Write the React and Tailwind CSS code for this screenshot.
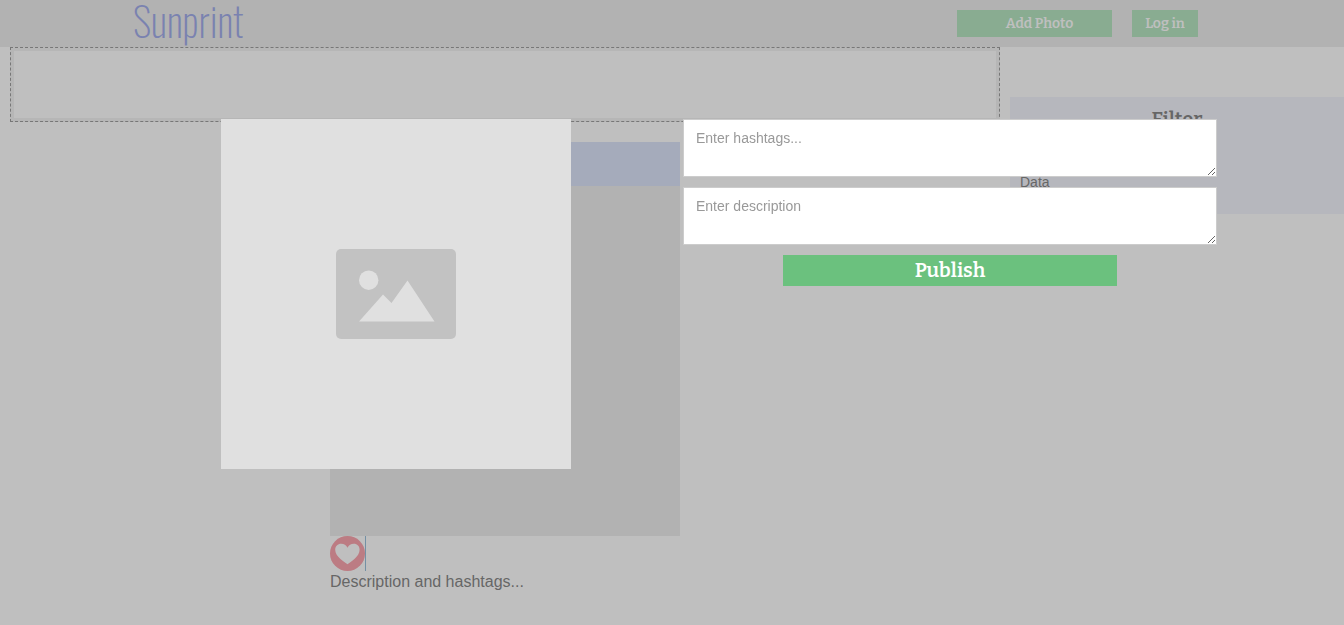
function Header() {
  return (
    <header className="flex h-[47px] items-start justify-between bg-[#e4e4e4] pr-[146px] pl-[133px]">
      <a
        href="#home"
        className="font-['Oswald','Roboto_Condensed','Liberation_Sans_Narrow','Roboto',sans-serif] text-[40px] leading-10 font-extralight text-[#7484e0]"
      >
        Sunprint
      </a>
      <nav className="flex gap-5 pt-2.5 font-['Bitter','DejaVu_Serif_Condensed','DejaVu_Serif',serif] text-sm font-semibold text-white">
        <button type="button" className="h-[27px] w-[155px] bg-[#92d8a2] pl-2.5">
          Add Photo
        </button>
        <button type="button" className="h-[27px] w-[66px] bg-[#92d8a2]">
          Log in
        </button>
      </nav>
    </header>
  );
}

function Post() {
  return (
    <article className="mx-auto mt-5 w-[350px]">
      <div className="h-11 bg-[#cad6f6]" />
      <div className="h-[350px] bg-[#e4e4e4]" />
      <div className="flex">
        <button type="button" aria-label="Like" className="size-[35px]">
          <svg viewBox="0 0 35 35" className="size-full">
            <circle cx="17.5" cy="17.5" r="17.5" fill="#f87886" />
            <path
              d="M17.500 28.300C14.500 25.800 5.200 21 5.200 13.800C5.200 10.200 7.800 7.800 11.200 7.800C14 7.800 16.300 9.300 17.500 11.700C18.700 9.300 21 7.800 23.800 7.800C27.200 7.800 29.600 10.200 29.600 13.800C29.600 21 20.500 25.800 17.500 28.300Z"
              fill="#fff"
            />
          </svg>
        </button>
        <span className="border-l border-[#68a0c8]" />
      </div>
      <p className="text-base leading-[22px]">Description and hashtags...</p>
    </article>
  );
}

function PublishDialog() {
  const field =
    "block h-[58px] w-full resize border border-[#ccc] bg-white px-3 py-2.5 text-sm leading-4 text-[#555] outline-none placeholder:text-[#999]";
  return (
    <div
      role="dialog"
      aria-label="Publish photo"
      className="fixed inset-0 flex items-start bg-[#808080]/50 pt-[119px] pr-[127px] pl-[221px]"
    >
      <div className="flex size-[350px] shrink-0 items-center justify-center bg-[#e0e0e0]">
        <svg viewBox="0 0 120 90" className="w-[120px]" aria-hidden="true">
          <rect width="120" height="90" rx="5" fill="#c2c2c2" />
          <circle cx="32.700" cy="31.200" r="9.700" fill="#e0e0e0" />
          <path d="M23 72.500L47 45.500L55.500 54L71.500 31.500L98.500 72.500Z" fill="#e0e0e0" />
        </svg>
      </div>
      <form className="ml-28 flex flex-1 flex-col gap-2.5">
        <textarea aria-label="Hashtags" placeholder="Enter hashtags..." className={field} />
        <textarea aria-label="Description" placeholder="Enter description" className={field} />
        <button
          type="button"
          className="mx-[100px] h-[31px] bg-[#6bc17e] pb-0.5 font-['Bitter','DejaVu_Serif_Condensed','DejaVu_Serif',serif] text-xl leading-none font-semibold text-white"
        >
          Publish
        </button>
      </form>
    </div>
  );
}

export default function App() {
  return (
    <div className="min-h-screen bg-white font-['Liberation_Sans',Arial,sans-serif] text-[#4c4c4c]">
      <Header />
      <main className="flex items-start gap-2.5 pl-2.5">
        <section className="flex-1">
          <div className="h-[75px] border border-dashed border-[#6e6e6e] bg-[#ececec] p-[3px]">
            <div className="h-full bg-white" />
          </div>
          <Post />
        </section>
        <aside className="mt-[50px] h-[117px] w-[334px] bg-[#eceefa] p-2.5">
          <h2 className="text-center font-['Bitter','DejaVu_Serif_Condensed','DejaVu_Serif',serif] text-xl leading-6 font-semibold">
            Filter
          </h2>
          <p className="mt-10 text-sm leading-[22px]">Data</p>
        </aside>
      </main>
      <PublishDialog />
    </div>
  );
}
